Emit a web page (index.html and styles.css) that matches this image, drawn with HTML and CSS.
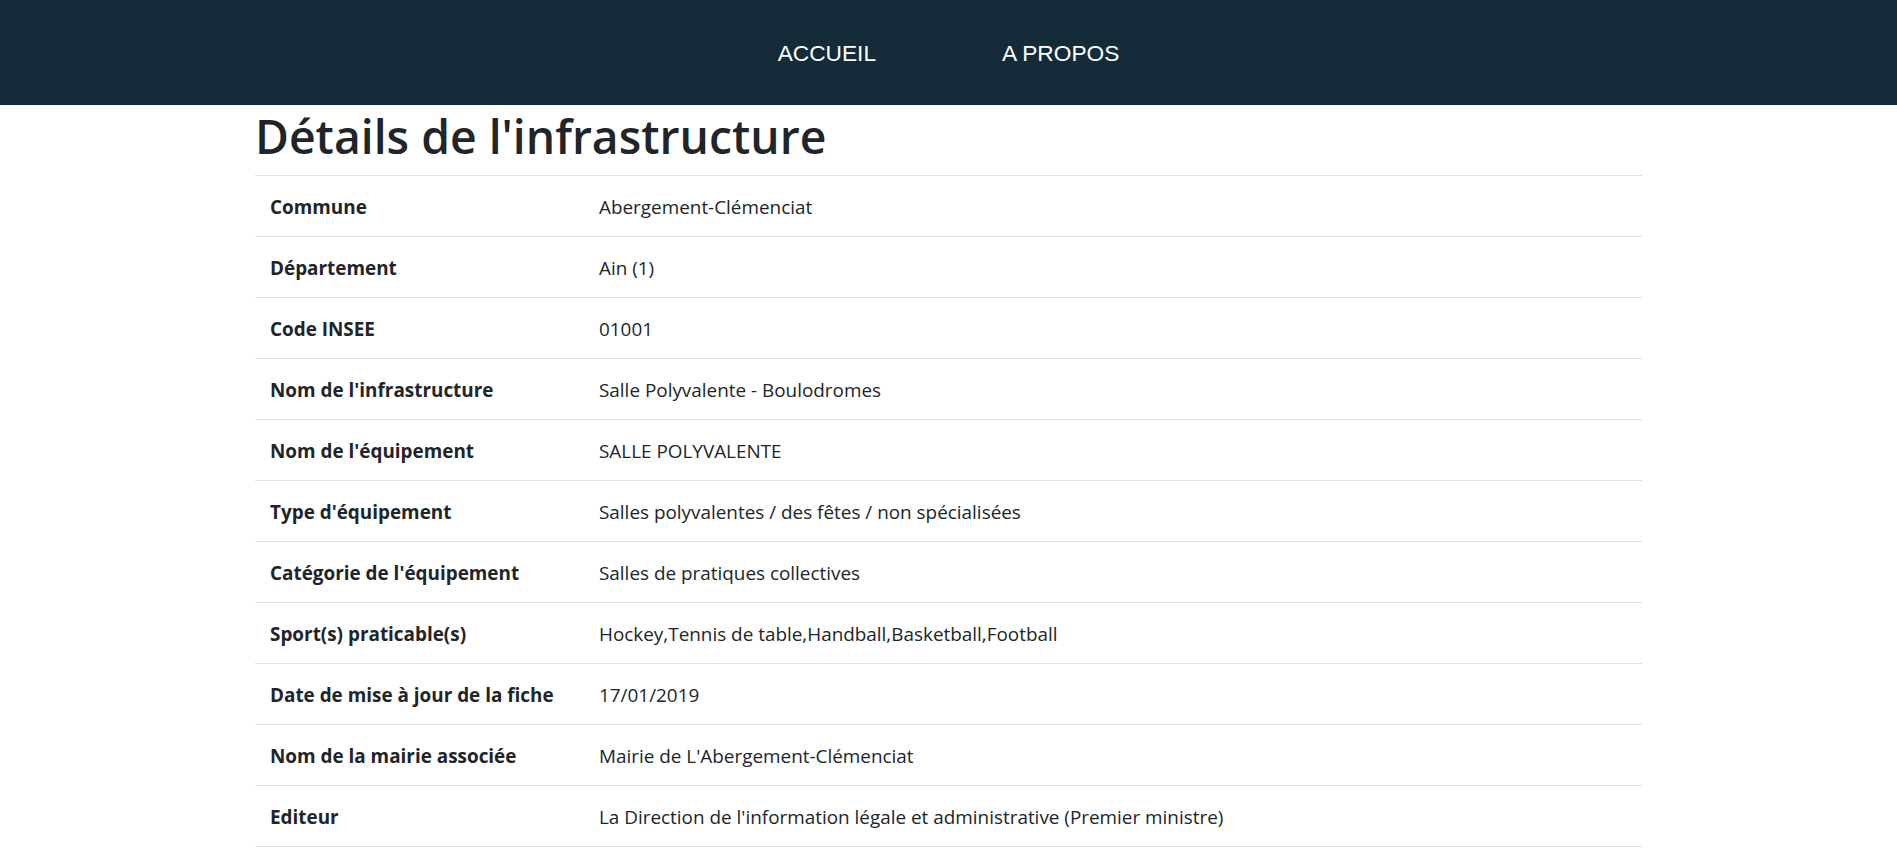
FILE: index.html
```html
<!DOCTYPE html>
<html lang="fr">
<head>
<meta charset="utf-8">
<title>Détails de l'infrastructure</title>
<link rel="stylesheet" href="styles.css">
</head>
<body>
<nav class="topnav">
  <a class="topnav-link" href="#">ACCUEIL</a>
  <a class="topnav-link" href="#">A PROPOS</a>
</nav>
<main class="container">
  <h1 class="page-title">Détails de l'infrastructure</h1>
  <table class="details">
    <tbody>
      <tr><th>Commune</th><td>Abergement-Clémenciat</td></tr>
      <tr><th>Département</th><td>Ain (1)</td></tr>
      <tr><th>Code INSEE</th><td>01001</td></tr>
      <tr><th>Nom de l'infrastructure</th><td>Salle Polyvalente - Boulodromes</td></tr>
      <tr><th>Nom de l'équipement</th><td>SALLE POLYVALENTE</td></tr>
      <tr><th>Type d'équipement</th><td>Salles polyvalentes / des fêtes / non spécialisées</td></tr>
      <tr><th>Catégorie de l'équipement</th><td>Salles de pratiques collectives</td></tr>
      <tr><th>Sport(s) praticable(s)</th><td>Hockey,Tennis de table,Handball,Basketball,Football</td></tr>
      <tr><th>Date de mise à jour de la fiche</th><td>17/01/2019</td></tr>
      <tr><th>Nom de la mairie associée</th><td>Mairie de L'Abergement-Clémenciat</td></tr>
      <tr><th>Editeur</th><td>La Direction de l'information légale et administrative (Premier ministre)</td></tr>
    </tbody>
  </table>
</main>
</body>
</html>
```

FILE: styles.css
```css
html, body {
  margin: 0;
  padding: 0;
}
body {
  background: #ffffff;
  color: #212529;
  font-family: "Open Sans", "Noto Sans", sans-serif;
  font-size: 18.9px;
  line-height: 30px;
}
.topnav {
  height: 105px;
  background: #152b3a;
  display: flex;
  justify-content: center;
  align-items: center;
  gap: 126px;
}
.topnav-link {
  color: #ffffff;
  text-decoration: none;
  font-family: "Liberation Sans", Arial, sans-serif;
  font-size: 22.7px;
  line-height: 1;
  padding-top: 2px;
}
.container {
  width: 1387px;
  margin: 0 auto;
}
.page-title {
  margin: 0 0 8px;
  padding-top: 2px;
  font-size: 46.3px;
  font-weight: 600;
  line-height: 60px;
  color: #212529;
}
.details {
  width: 100%;
  border-collapse: collapse;
}
.details th,
.details td {
  padding: 16px 15px 14px;
  border-top: 1px solid #dee2e6;
  text-align: left;
  vertical-align: top;
  line-height: 30px;
}
.details tr:last-child th,
.details tr:last-child td {
  border-bottom: 1px solid #dee2e6;
}
.details th {
  width: 299px;
  font-weight: 700;
  white-space: nowrap;
}
.details td {
  font-weight: 400;
}
```
